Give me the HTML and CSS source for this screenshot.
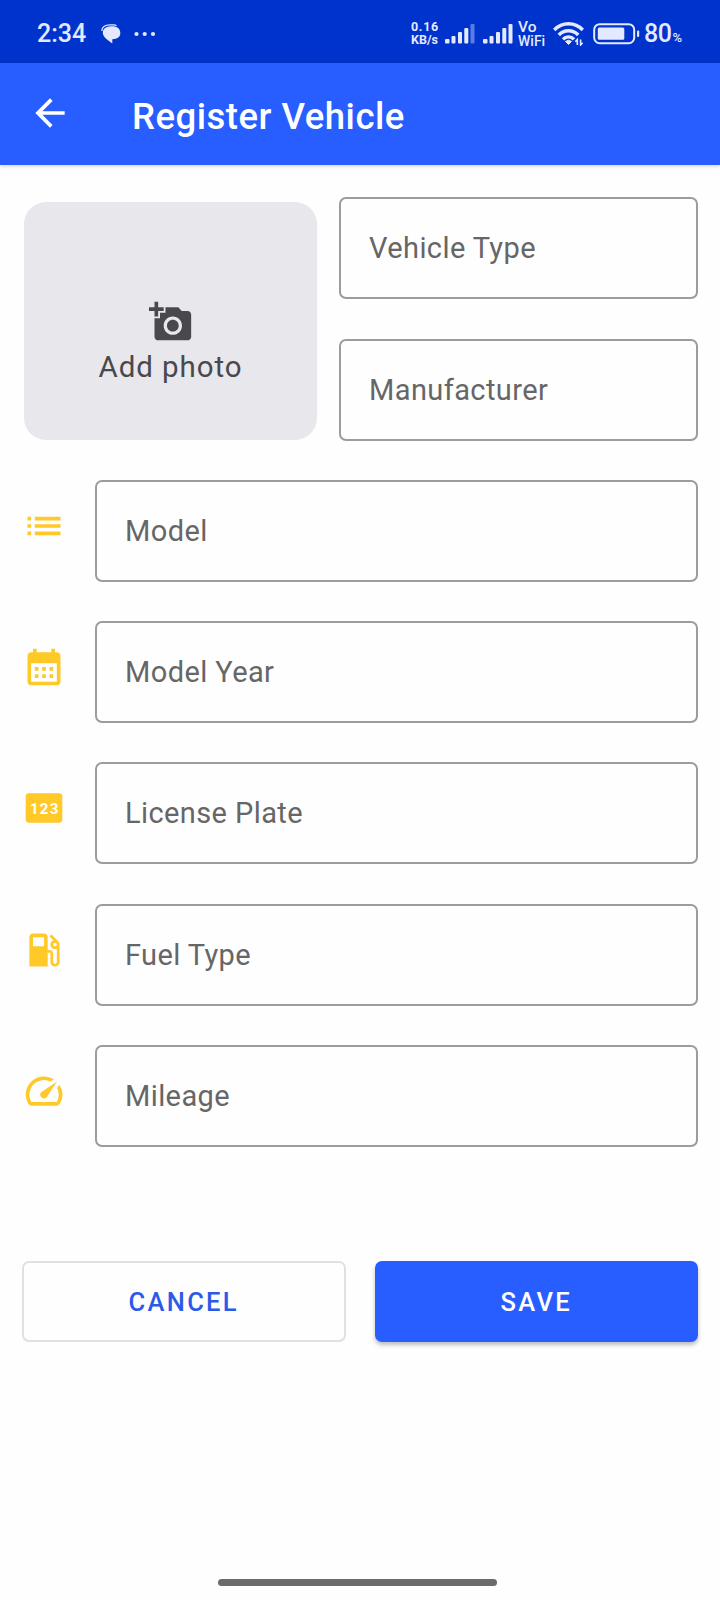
FILE: index.html
```html
<!DOCTYPE html>
<html lang="en">
<head>
    <meta charset="UTF-8">
    <title>Register Vehicle</title>
    <link rel="stylesheet" href="styles.css">
</head>
<body>
<div class="status">
    <span class="time">2:34</span>
    <svg class="bubble" width="20" height="20" viewBox="0 0 20 20">
        <path d="M.8 7C1 3 4 .900 9 .900h3.500q2 0 3 1" fill="none" stroke="#e3eaff" stroke-width="1.200"/>
        <path d="M10 2.300C16 2 19.300 4.500 19.300 9c0 4-3 6-8 6.200V19.500C7 16 1.800 13.500 1.800 8.500 1.800 5 5 2.500 10 2.300z" fill="#e3eaff"/>
    </svg>
    <svg class="dots" width="22" height="6" viewBox="0 0 22 6" fill="#e3eaff">
        <circle cx="2.500" cy="3" r="2.100"/><circle cx="10.700" cy="3" r="2.100"/><circle cx="19" cy="3" r="2.100"/>
    </svg>
    <div class="speed"><span>0.16</span><br>KB/s</div>
    <svg class="signal" width="30" height="20" viewBox="0 0 30 20" fill="#e3eaff">
        <rect x="0" y="15" width="4.500" height="4.500" rx="1"/>
        <rect x="6.500" y="12" width="4" height="7.500" rx="1"/>
        <rect x="13" y="8" width="4" height="11.500" rx="1"/>
        <rect x="19.300" y="4" width="4" height="15.500" rx="1"/>
        <rect x="25.500" y="0" width="4" height="19.500" rx="1" opacity=".4"/>
    </svg>
    <svg class="signal" width="30" height="20" viewBox="0 0 30 20" fill="#e3eaff">
        <rect x="0" y="15" width="4.500" height="4.500" rx="1"/>
        <rect x="6.500" y="12" width="4" height="7.500" rx="1"/>
        <rect x="13" y="8" width="4" height="11.500" rx="1"/>
        <rect x="19.300" y="4" width="4" height="15.500" rx="1"/>
        <rect x="25.500" y="0" width="4" height="19.500" rx="1"/>
    </svg>
    <div class="vowifi"><span>Vo</span><br>WiFi</div>
    <svg class="wifi" width="31" height="24" viewBox="0 0 31 24" fill="none" stroke="#e3eaff" stroke-width="3.400">
        <path d="M1.200 8C9-.300 22-.300 29.800 8"/>
        <path d="M5.800 13C11 7.300 20 7.300 25.200 13"/>
        <path d="M10 17.300C13 14 18 14 21 17.300"/>
        <path d="M12.500 19.500Q15.500 17 18.500 19.500L15.500 22.500z" fill="#e3eaff" stroke-width="1"/>
        <path d="M24.300 23v-5.500l-2 2.200M27.600 17.500v5.500l2-2.200" stroke-width="1.600"/>
    </svg>
    <svg class="battery" width="47" height="22" viewBox="0 0 47 22">
        <rect x="1.200" y="1.200" width="40" height="19" rx="5.500" fill="none" stroke="#e3eaff" stroke-width="2"/>
        <rect x="4.800" y="4.500" width="26.500" height="12.300" rx="1.500" fill="#e3eaff"/>
        <rect x="44" y="7.500" width="2.200" height="6.500" rx="1" fill="#e3eaff"/>
    </svg>
    <span class="percent">80<small>%</small></span>
</div>

<div class="appbar">
    <svg class="icon" viewBox="0 0 24 24"><path d="M20 11H7.830l5.590-5.590L12 4l-8 8 8 8 1.410-1.410L7.830 13H20v-2z"/></svg>
    <h1>Register Vehicle</h1>
</div>

<form name="vehicle" id="vehicle">
    <div class="top">
        <div class="photo">
            <svg class="icon" viewBox="0 0 24 24"><path d="M3 4V1h2v3h3v2H5v3H3V6H0V4h3zm3 6V7h3V4h7l1.830 2H21c1.100 0 2 .900 2 2v12c0 1.100-.900 2-2 2H5c-1.100 0-2-.900-2-2V10h3zm7 9c2.760 0 5-2.240 5-5s-2.240-5-5-5-5 2.240-5 5 2.240 5 5 5zm-3.200-5c0 1.770 1.430 3.200 3.200 3.200s3.200-1.430 3.200-3.200-1.430-3.200-3.200-3.200-3.200 1.430-3.200 3.200z"/></svg>
            <span>Add photo</span>
        </div>
        <div class="column">
            <input type="text" name="type" placeholder="Vehicle Type">
            <input type="text" name="manufacturer" placeholder="Manufacturer">
        </div>
    </div>

    <div class="row">
        <svg class="icon" viewBox="0 0 24 24"><path d="M3 13h2v-2H3v2zm0 4h2v-2H3v2zm0-8h2V7H3v2zm4 4h14v-2H7v2zm0 4h14v-2H7v2zM7 7v2h14V7H7z"/></svg>
        <input type="text" name="model" placeholder="Model">
    </div>
    <div class="row">
        <svg class="icon" viewBox="0 0 24 24"><path d="M19 4h-1V2h-2v2H8V2H6v2H5C3.890 4 3.010 4.900 3.010 6L3 20c0 1.100.890 2 2 2h14c1.100 0 2-.900 2-2V6c0-1.100-.900-2-2-2zm0 16H5V10h14v10zM9 14H7v-2h2v2zm4 0h-2v-2h2v2zm4 0h-2v-2h2v2zM9 18H7v-2h2v2zm4 0h-2v-2h2v2zm4 0h-2v-2h2v2z"/></svg>
        <input type="text" name="year" placeholder="Model Year">
    </div>
    <div class="row">
        <svg class="icon" viewBox="0 0 24 24"><rect x="2" y="4" width="20" height="16" rx="1.700"/><text class="digits" x="12.400" y="15">123</text></svg>
        <input type="text" name="plate" placeholder="License Plate">
    </div>
    <div class="row">
        <svg class="icon" viewBox="0 0 24 24"><path d="M19.770 7.230l.010-.010-3.720-3.720L15 4.560l2.110 2.110c-.940.360-1.610 1.260-1.610 2.330 0 1.380 1.120 2.500 2.500 2.500.360 0 .690-.080 1-.210v7.210c0 .550-.450 1-1 1s-1-.450-1-1V14c0-1.100-.900-2-2-2h-1V5c0-1.100-.900-2-2-2H6c-1.100 0-2 .900-2 2v16h10v-7.500h1.500v5c0 1.380 1.120 2.500 2.500 2.500s2.500-1.120 2.500-2.500V9c0-.690-.280-1.320-.730-1.770zM12 10H6V5h6v5zm6 0c-.550 0-1-.450-1-1s.450-1 1-1 1 .450 1 1-.450 1-1 1z"/></svg>
        <input type="text" name="fuel" placeholder="Fuel Type">
    </div>
    <div class="row">
        <svg class="icon" viewBox="0 0 24 24"><path d="M20.380 8.570l-1.230 1.850a8 8 0 0 1-.220 7.580H5.070A8 8 0 0 1 15.580 6.850l1.850-1.230A10 10 0 0 0 3.350 19a2 2 0 0 0 1.720 1h13.850a2 2 0 0 0 1.740-1 10 10 0 0 0-.270-10.440zm-9.790 6.840a2 2 0 0 0 2.830 0l5.660-8.490-8.490 5.660a2 2 0 0 0 0 2.830z"/></svg>
        <input type="text" name="mileage" placeholder="Mileage">
    </div>

    <div class="buttons">
        <button type="reset" class="cancelbtn">CANCEL</button>
        <button type="button" class="savebtn">SAVE</button>
    </div>
</form>

<div class="homebar"></div>
</body>
</html>
```
FILE: styles.css
```css
* {
    box-sizing: border-box;
}

body {
    margin: 0;
    height: 1600px;
    display: flex;
    flex-direction: column;
    background: #fefefe;
    font-family: Roboto, sans-serif;
}

svg {
    display: block;
    flex: none;
}

.icon {
    width: 44px;
    height: 44px;
    fill: #ffc928;
}

.status {
    height: 62.5px;
    padding: 5px 0 0 37px;
    display: flex;
    align-items: center;
    background: #0033cc;
    color: #e3eaff;
}

.time {
    width: 64px;
    font-size: 25px;
    font-weight: 500;
}

.dots {
    margin-left: 13px;
}

.speed {
    width: 34px;
    margin-left: 255px;
    font-size: 12.5px;
    line-height: 12.5px;
    font-weight: bold;
}

.speed span {
    letter-spacing: 0.7px;
}

.signal {
    margin-right: 7.5px;
}

.vowifi {
    width: 35px;
    margin-left: -2px;
    font-size: 14px;
    line-height: 14px;
    font-weight: 500;
}

.vowifi span {
    font-size: 15.5px;
}

.battery {
    margin-left: 9px;
}

.percent {
    margin-left: 4px;
    font-size: 25px;
    font-weight: 500;
    letter-spacing: -0.5px;
}

.percent small {
    font-size: 13px;
    margin-left: 1px;
}

.appbar {
    height: 102.5px;
    padding-left: 28px;
    display: flex;
    align-items: center;
    background: #285eff;
    box-shadow: 0 1px 4px rgba(0, 0, 0, 0.2);
}

.appbar .icon {
    margin-bottom: 2px;
    fill: white;
}

h1 {
    margin: 5px 0 0 60px;
    color: white;
    font-size: 36.5px;
    font-weight: 500;
    letter-spacing: 0.5px;
}

form {
    padding: 32.3px 22px 0;
    display: flex;
    flex-direction: column;
    gap: 39.3px;
}

.top {
    display: flex;
    gap: 22px;
}

.photo {
    width: 293px;
    height: 238.5px;
    margin: 4.7px 0 0 2px;
    padding-top: 98px;
    display: flex;
    flex-direction: column;
    align-items: center;
    background: #e8e7ec;
    border-radius: 22px;
    color: #49494d;
    font-size: 29.5px;
    letter-spacing: 0.9px;
}

.photo .icon {
    fill: #49494d;
}

.photo span {
    margin-top: 6px;
    line-height: 34px;
}

.column {
    flex: 1;
    display: flex;
    flex-direction: column;
    gap: 39.3px;
}

.row {
    display: flex;
    align-items: center;
}

.row .icon {
    margin: 0 29px 10px 0;
}

.digits {
    fill: white;
    font-size: 8.2px;
    font-weight: bold;
    letter-spacing: 0.7px;
    text-anchor: middle;
}

input[type=text] {
    width: 100%;
    min-width: 0;
    height: 102px;
    padding: 0 28px;
    border: 2px solid #9c9c9c;
    border-radius: 7px;
    outline: none;
    background: transparent;
    color: #222;
    font-family: inherit;
    font-size: 29px;
    letter-spacing: 0.4px;
}

input::placeholder {
    color: #666;
    opacity: 1;
}

.buttons {
    margin-top: 74.5px;
    display: flex;
    gap: 29px;
}

button {
    flex: 1;
    width: 50%;
    height: 81px;
    padding: 2px 0 0;
    border: 2px solid transparent;
    border-radius: 7px;
    font-family: inherit;
    font-size: 25.5px;
    font-weight: 500;
    letter-spacing: 2.3px;
    cursor: pointer;
}

.cancelbtn {
    border-color: #e0e0e0;
    background: transparent;
    color: #2a5ae8;
}

.savebtn {
    border-color: #285eff;
    background: #285eff;
    color: white;
    box-shadow: 0 3px 4px rgba(0, 0, 0, 0.25);
}

.homebar {
    width: 279px;
    height: 7px;
    margin: auto auto 14px 218px;
    border-radius: 4px;
    background: #6b6b6b;
}
```
